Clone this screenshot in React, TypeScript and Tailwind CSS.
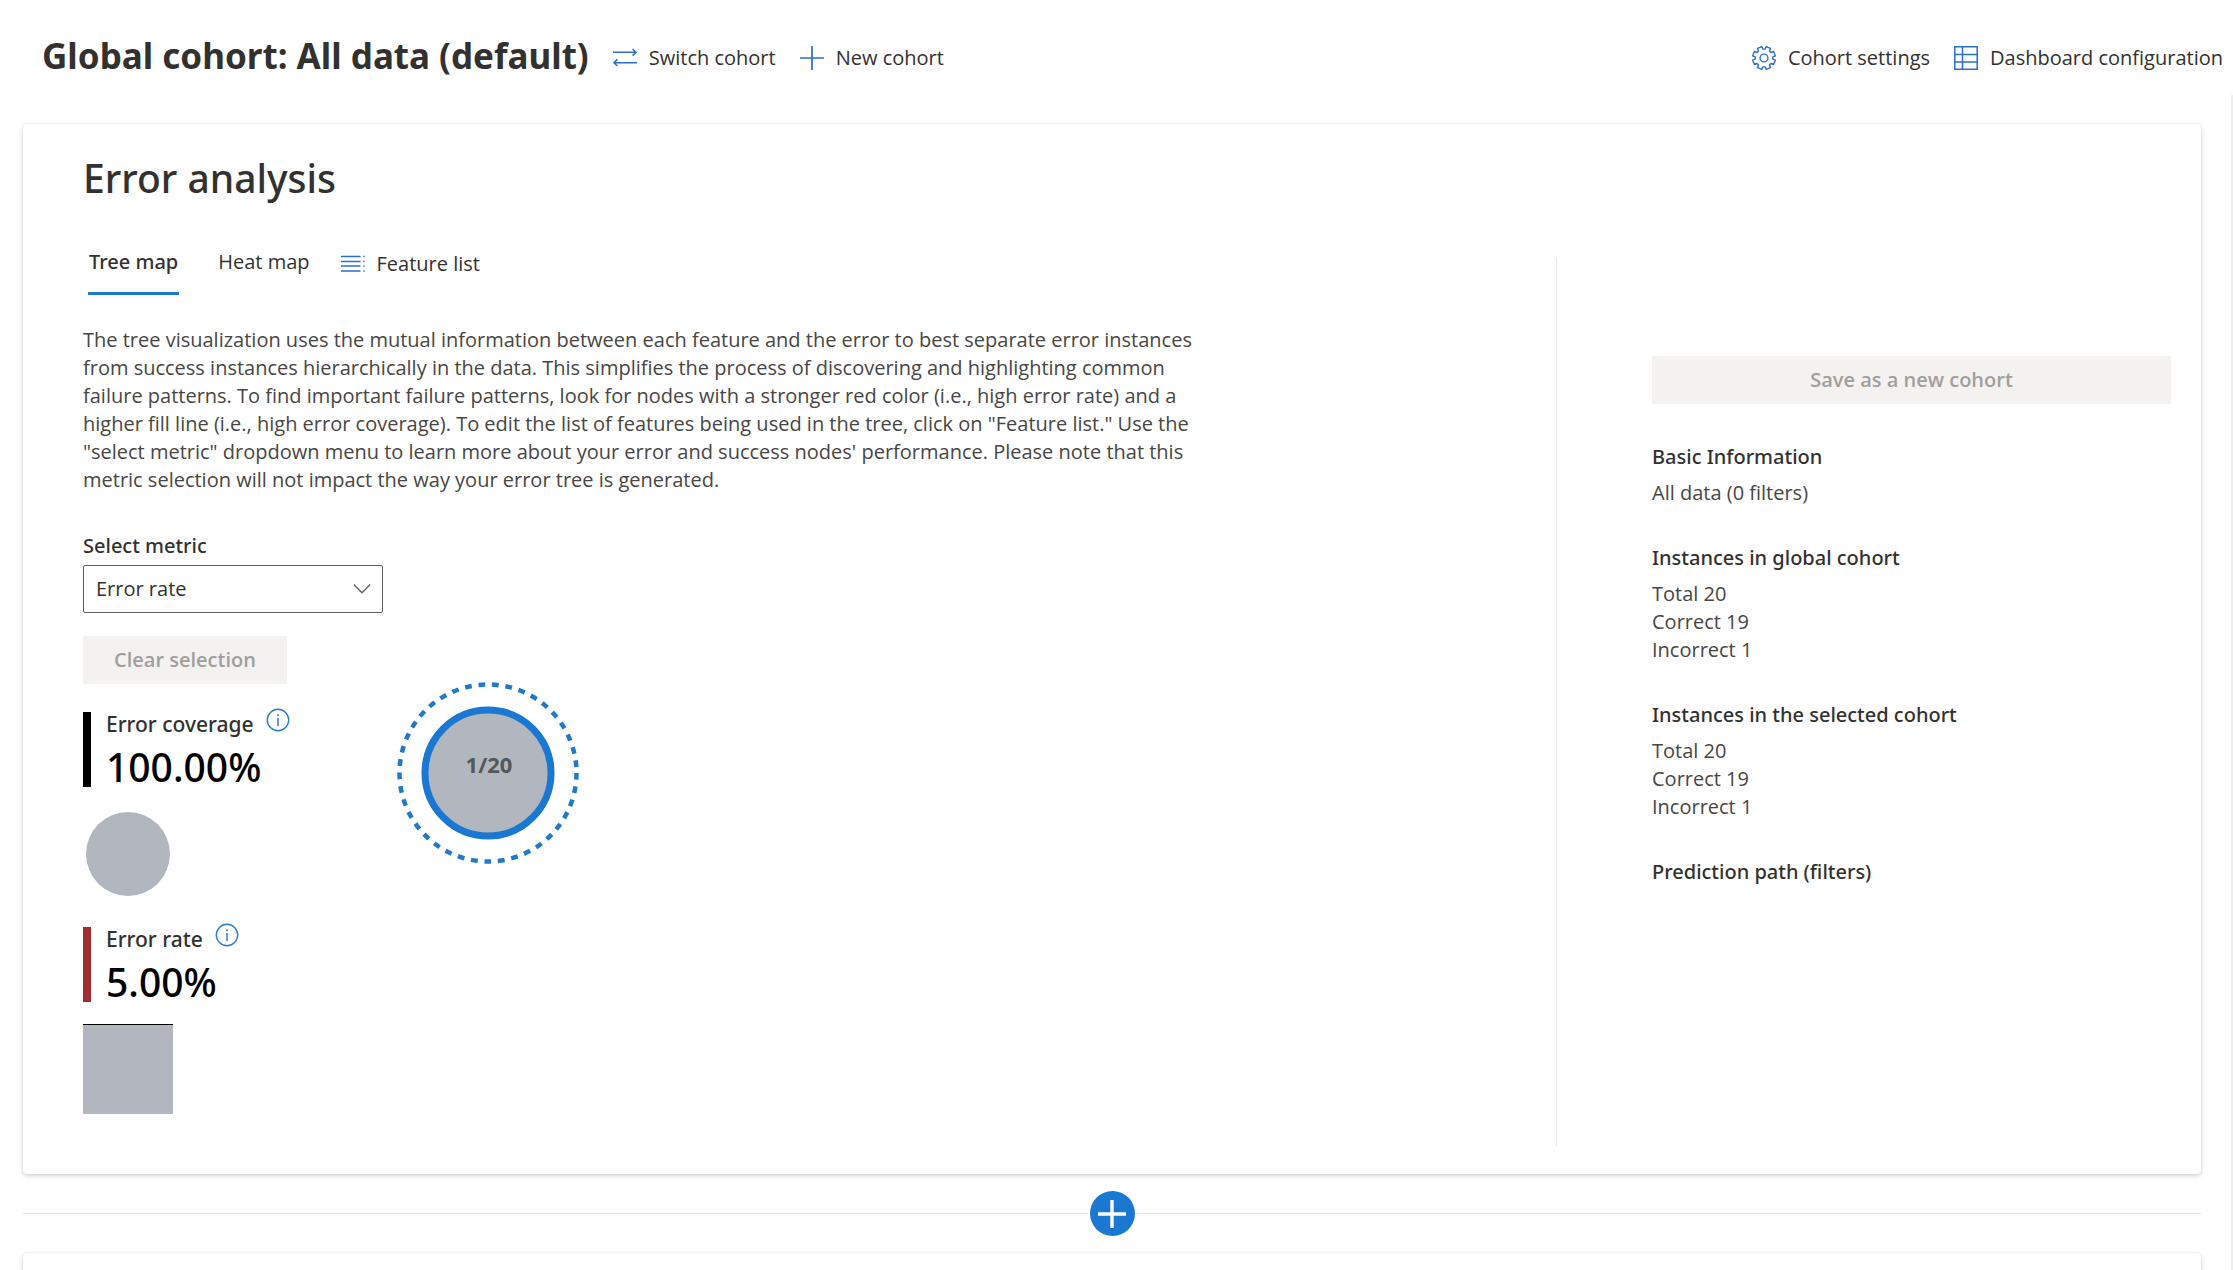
import type { ReactNode } from "react";

const BLUE = "#2b70c9";

function SwitchIcon() {
  return (
    <svg width="24" height="24" viewBox="0 0 24 24" fill="none" stroke={BLUE} strokeWidth="1.6" aria-hidden="true">
      <path d="M0 6.3H23M19.6 3l3.4 3.3-3.4 3.3" />
      <path d="M24 16.7H1M4.4 13.4L1 16.7l3.4 3.3" />
    </svg>
  );
}

function PlusIcon() {
  return (
    <svg width="24" height="24" viewBox="0 0 24 24" fill="none" stroke={BLUE} strokeWidth="1.7" aria-hidden="true">
      <path d="M12 0v24M0 12h24" />
    </svg>
  );
}

function GearIcon() {
  const steps = 8;
  const points: string[] = [];
  for (let i = 0; i < steps; i++) {
    const base = (i * Math.PI * 2) / steps + Math.PI / 8;
    const profile: [number, number][] = [
      [-0.27, 8.9],
      [-0.2, 11.6],
      [0.2, 11.6],
      [0.27, 8.9],
    ];
    for (const [offset, radius] of profile) {
      const x = 12 + radius * Math.cos(base + offset);
      const y = 12 + radius * Math.sin(base + offset);
      points.push(`${x.toFixed(2)} ${y.toFixed(2)}`);
    }
  }
  return (
    <svg width="24" height="24" viewBox="0 0 24 24" fill="none" stroke={BLUE} strokeWidth="1.4" strokeLinejoin="round" aria-hidden="true">
      <path d={`M${points.join("L")}Z`} />
      <circle cx="12" cy="12" r="3.9" />
    </svg>
  );
}

function TableIcon() {
  return (
    <svg width="24" height="24" viewBox="0 0 24 24" fill="none" stroke={BLUE} strokeWidth="1.5" aria-hidden="true">
      <path d="M.8.8h22.4v22.4H.8zM8.5.8v22.4M.8 8.5h22.4M.8 16h22.4" />
    </svg>
  );
}

function ListIcon() {
  return (
    <svg width="24" height="24" viewBox="0 0 24 24" fill="none" aria-hidden="true">
      <path d="M0 4.5h19.5M0 9.5h19.5M0 14h19.5M0 19h19.5" stroke={BLUE} strokeWidth="1.5" />
      <path d="M22 4.5h2M22 9.5h2M22 14h2M22 19h2" stroke="#6fa3df" strokeWidth="1.5" />
    </svg>
  );
}

function InfoIcon() {
  return (
    <svg width="24" height="24" viewBox="0 0 24 24" fill="none" stroke="#2b7cd3" aria-hidden="true">
      <circle cx="12" cy="12" r="10.7" strokeWidth="1.4" />
      <path d="M12 10v8M12 6.2v2" strokeWidth="1.5" />
    </svg>
  );
}

function Command({ icon, children }: { icon: ReactNode; children: ReactNode }) {
  return (
    <button type="button" className="flex items-center gap-3 whitespace-nowrap text-xl leading-7">
      {icon}
      <span>{children}</span>
    </button>
  );
}

function Metric({ label, value, bar }: { label: string; value: string; bar: string }) {
  return (
    <div className="flex h-[75px] gap-[15px]">
      <div className={`w-2 ${bar}`} />
      <div className="font-['Noto_Sans',sans-serif] font-medium">
        <div className="flex h-6 items-center gap-3">
          <span className="text-[21px] leading-6">{label}</span>
          <button type="button" aria-label={`About ${label.toLowerCase()}`} className="-mt-2">
            <InfoIcon />
          </button>
        </div>
        <div className="text-[39px] leading-[62px] text-black">{value}</div>
      </div>
    </div>
  );
}

function InfoSection({ title, lines }: { title: string; lines: string[] }) {
  return (
    <section className="text-xl leading-7">
      <h3 className="mb-2 font-['Noto_Sans',sans-serif] font-medium">{title}</h3>
      {lines.map((line) => (
        <p key={line} className="text-[#484644]">{line}</p>
      ))}
    </section>
  );
}

const description = [
  "The tree visualization uses the mutual information between each feature and the error to best separate error instances",
  "from success instances hierarchically in the data. This simplifies the process of discovering and highlighting common",
  "failure patterns. To find important failure patterns, look for nodes with a stronger red color (i.e., high error rate) and a",
  "higher fill line (i.e., high error coverage). To edit the list of features being used in the tree, click on \"Feature list.\" Use the",
  "\"select metric\" dropdown menu to learn more about your error and success nodes' performance. Please note that this",
  "metric selection will not impact the way your error tree is generated.",
];

export default function App() {
  return (
    <div className="flex h-screen flex-col overflow-hidden bg-white font-['Open_Sans','Noto_Sans',sans-serif] text-[#323130]">
      <header className="flex shrink-0 items-center gap-6 pt-8 pr-2.5 pb-[15px] pl-[42px]">
        <h1 className="whitespace-nowrap font-['Noto_Sans',sans-serif] text-[35px] leading-[48px] font-bold">
          Global cohort: All data (default)
        </h1>
        <div className="flex flex-1 items-center gap-6 pt-1">
          <Command icon={<SwitchIcon />}>Switch cohort</Command>
          <Command icon={<PlusIcon />}>New cohort</Command>
          <div className="flex-1" />
          <Command icon={<GearIcon />}>Cohort settings</Command>
          <Command icon={<TableIcon />}>Dashboard configuration</Command>
        </div>
      </header>

      <main className="flex-1 overflow-hidden border-r-2 border-[#ededed] pt-[29px] pr-[30px] pl-[23px]">
        <section className="rounded-sm bg-white pt-6 pr-[30px] pb-7 pl-[60px] shadow-[0_2px_5px_rgba(0,0,0,0.16),0_0_2px_rgba(0,0,0,0.12)]">
          <h2 className="font-['Noto_Sans',sans-serif] text-[39px] leading-[60px] font-medium">Error analysis</h2>

          <div className="mt-[50px] flex">
            <div className="flex-1 pb-8">
              <div className="-mt-6 flex items-start pl-[5px]">
                <div role="tablist" className="flex gap-[38px] text-xl leading-7">
                  <button
                    type="button"
                    role="tab"
                    aria-selected="true"
                    className="border-b-3 border-[#1f78c8] px-px pt-3.5 pb-4 font-['Noto_Sans',sans-serif] font-medium"
                  >
                    Tree map
                  </button>
                  <button type="button" role="tab" aria-selected="false" className="border-b-3 border-transparent px-px pt-3.5 pb-4">
                    Heat map
                  </button>
                </div>
                <div className="ml-[30px] pt-4">
                  <Command icon={<ListIcon />}>Feature list</Command>
                </div>
              </div>

              <p className="mt-[31px] text-xl leading-7 text-[#484644]">
                {description.map((line) => (
                  <span key={line} className="block">{line}</span>
                ))}
              </p>

              <label htmlFor="metric" className="mt-9 block font-['Noto_Sans',sans-serif] text-xl leading-8 font-medium">
                Select metric
              </label>
              <div className="relative mt-[3px] w-[300px]">
                <select
                  id="metric"
                  defaultValue="error-rate"
                  className="h-12 w-full appearance-none rounded-xs border border-[#605e5c] bg-white px-3 text-xl"
                >
                  <option value="error-rate">Error rate</option>
                </select>
                <svg className="pointer-events-none absolute top-4 right-3" width="18" height="16" viewBox="0 0 18 16" fill="none" stroke="#605e5c" strokeWidth="1.3" aria-hidden="true">
                  <path d="M.8 3.5L9 11.8l8.2-8.3" />
                </svg>
              </div>

              <button
                type="button"
                disabled
                className="mt-[23px] block h-12 w-[204px] rounded-xs bg-[#f3f2f1] text-xl font-semibold text-[#a19f9d]"
              >
                Clear selection
              </button>

              <div className="flex items-start">
                <div className="w-[312px] pt-7">
                  <Metric label="Error coverage" value="100.00%" bar="bg-black" />
                  <div className="mt-[25px] ml-[3px] size-[84px] rounded-full bg-[#b2b7bf]" />
                  <div className="mt-[31px]">
                    <Metric label="Error rate" value="5.00%" bar="bg-[#a12d33]" />
                  </div>
                  <div className="mt-[22px] size-[90px] border-t border-black bg-[#b2b7bf]" />
                </div>
                <svg width="188" height="188" viewBox="0 0 188 188" className="-mt-1" role="img" aria-label="Error tree root node">
                  <circle cx="93" cy="93" r="88.5" fill="none" stroke="#2179c9" strokeWidth="4.5" strokeDasharray="6.78 6.78" />
                  <circle cx="93" cy="93" r="63" fill="#b2b7bf" stroke="#1b78d2" strokeWidth="7" />
                  <text x="94" y="93" textAnchor="middle" fill="#555759" className="font-['Noto_Sans',sans-serif] text-[22px] font-bold">
                    1/20
                  </text>
                </svg>
              </div>
            </div>

            <aside className="w-[615px] shrink-0 border-l border-[#edebe9] pt-[98px] pl-[95px]">
              <button
                type="button"
                disabled
                className="block h-12 w-full rounded-xs bg-[#f3f2f1] text-xl font-semibold text-[#a19f9d]"
              >
                Save as a new cohort
              </button>
              <div className="mt-[39px] flex flex-col gap-[37px]">
                <InfoSection title="Basic Information" lines={["All data (0 filters)"]} />
                <InfoSection title="Instances in global cohort" lines={["Total 20", "Correct 19", "Incorrect 1"]} />
                <InfoSection title="Instances in the selected cohort" lines={["Total 20", "Correct 19", "Incorrect 1"]} />
                <InfoSection title="Prediction path (filters)" lines={[]} />
              </div>
            </aside>
          </div>
        </section>

        <div className="flex h-[79px] items-center gap-0.5">
          <div className="h-px flex-1 bg-[#e1e1e1]" />
          <button type="button" aria-label="Add component" className="flex size-[45px] items-center justify-center rounded-full bg-[#1b78d2]">
            <svg width="28" height="28" viewBox="0 0 28 28" stroke="#fff" strokeWidth="3.4" aria-hidden="true">
              <path d="M14 0v28M0 14h28" />
            </svg>
          </button>
          <div className="h-px flex-1 bg-[#e1e1e1]" />
        </div>

        <section className="h-40 rounded-sm bg-white shadow-[0_2px_5px_rgba(0,0,0,0.16),0_0_2px_rgba(0,0,0,0.12)]" />
      </main>
    </div>
  );
}
